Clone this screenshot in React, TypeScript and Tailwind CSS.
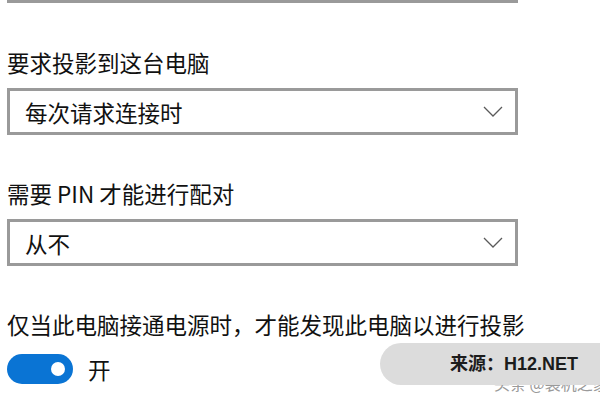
const font = { fontFamily: '"Noto Sans CJK SC", "Noto Sans", sans-serif' };

function Chevron() {
    return (
        <svg width="20" height="11" viewBox="0 0 20 11" fill="none">
            <polyline
                points="1,1 10,10 19,1"
                stroke="#5a5a5a"
                strokeWidth="1.3"
            />
        </svg>
    );
}

function Dropdown({ value }: { value: string }) {
    return (
        <div className="w-[511px] h-[47px] border-[3px] border-[#9a9a9a] bg-white flex items-center justify-between pl-[15px] pr-[12px]">
            <span className="text-[22.5px] leading-[30px] text-[#111]">{value}</span>
            <Chevron />
        </div>
    );
}

function Label({ text }: { text: string }) {
    return <div className="text-[22.5px] leading-[30px] text-[#111]">{text}</div>;
}

export default function App() {
    return (
        <div
            className="relative w-[600px] h-[400px] bg-white overflow-hidden"
            style={font}
        >
            <div className="pl-[7px] flex flex-col">
                {/* previous dropdown, scrolled off the top */}
                <div className="w-[511px] h-[3px] border-b-[3px] border-[#9a9a9a]" />

                <div className="mt-[44px]">
                    <Label text="要求投影到这台电脑" />
                </div>
                <div className="mt-[11px]">
                    <Dropdown value="每次请求连接时" />
                </div>

                <div className="mt-[43px]">
                    <Label text="需要 PIN 才能进行配对" />
                </div>
                <div className="mt-[11px]">
                    <Dropdown value="从不" />
                </div>

                <div className="mt-[43px]">
                    <Label text="仅当此电脑接通电源时，才能发现此电脑以进行投影" />
                </div>

                <div className="mt-[15px] flex items-center gap-[15px]">
                    <div className="w-[66px] h-[30px] rounded-full bg-[#0a74d4] flex items-center justify-end pr-[8px]">
                        <div className="w-[14px] h-[14px] rounded-full bg-white" />
                    </div>
                    <span className="text-[22.5px] leading-[30px] text-[#111]">开</span>
                </div>
            </div>

            {/* watermark */}
            <div className="absolute left-[494px] top-[373px] whitespace-nowrap text-[16px] leading-[20px] text-[#9a9a9a]">
                头条 @装机之家
            </div>
            <div className="absolute left-[380px] top-[343px] w-[240px] h-[42px] rounded-l-full bg-[#dcdcdc] flex items-center pl-[70px]">
                <span
                    className="whitespace-nowrap text-[18px] font-bold text-[#1c1c1c] leading-none"
                    style={{ fontFamily: '"Liberation Sans", "Noto Sans CJK SC", sans-serif' }}
                >
                    来源：H12.NET
                </span>
            </div>
        </div>
    );
}
